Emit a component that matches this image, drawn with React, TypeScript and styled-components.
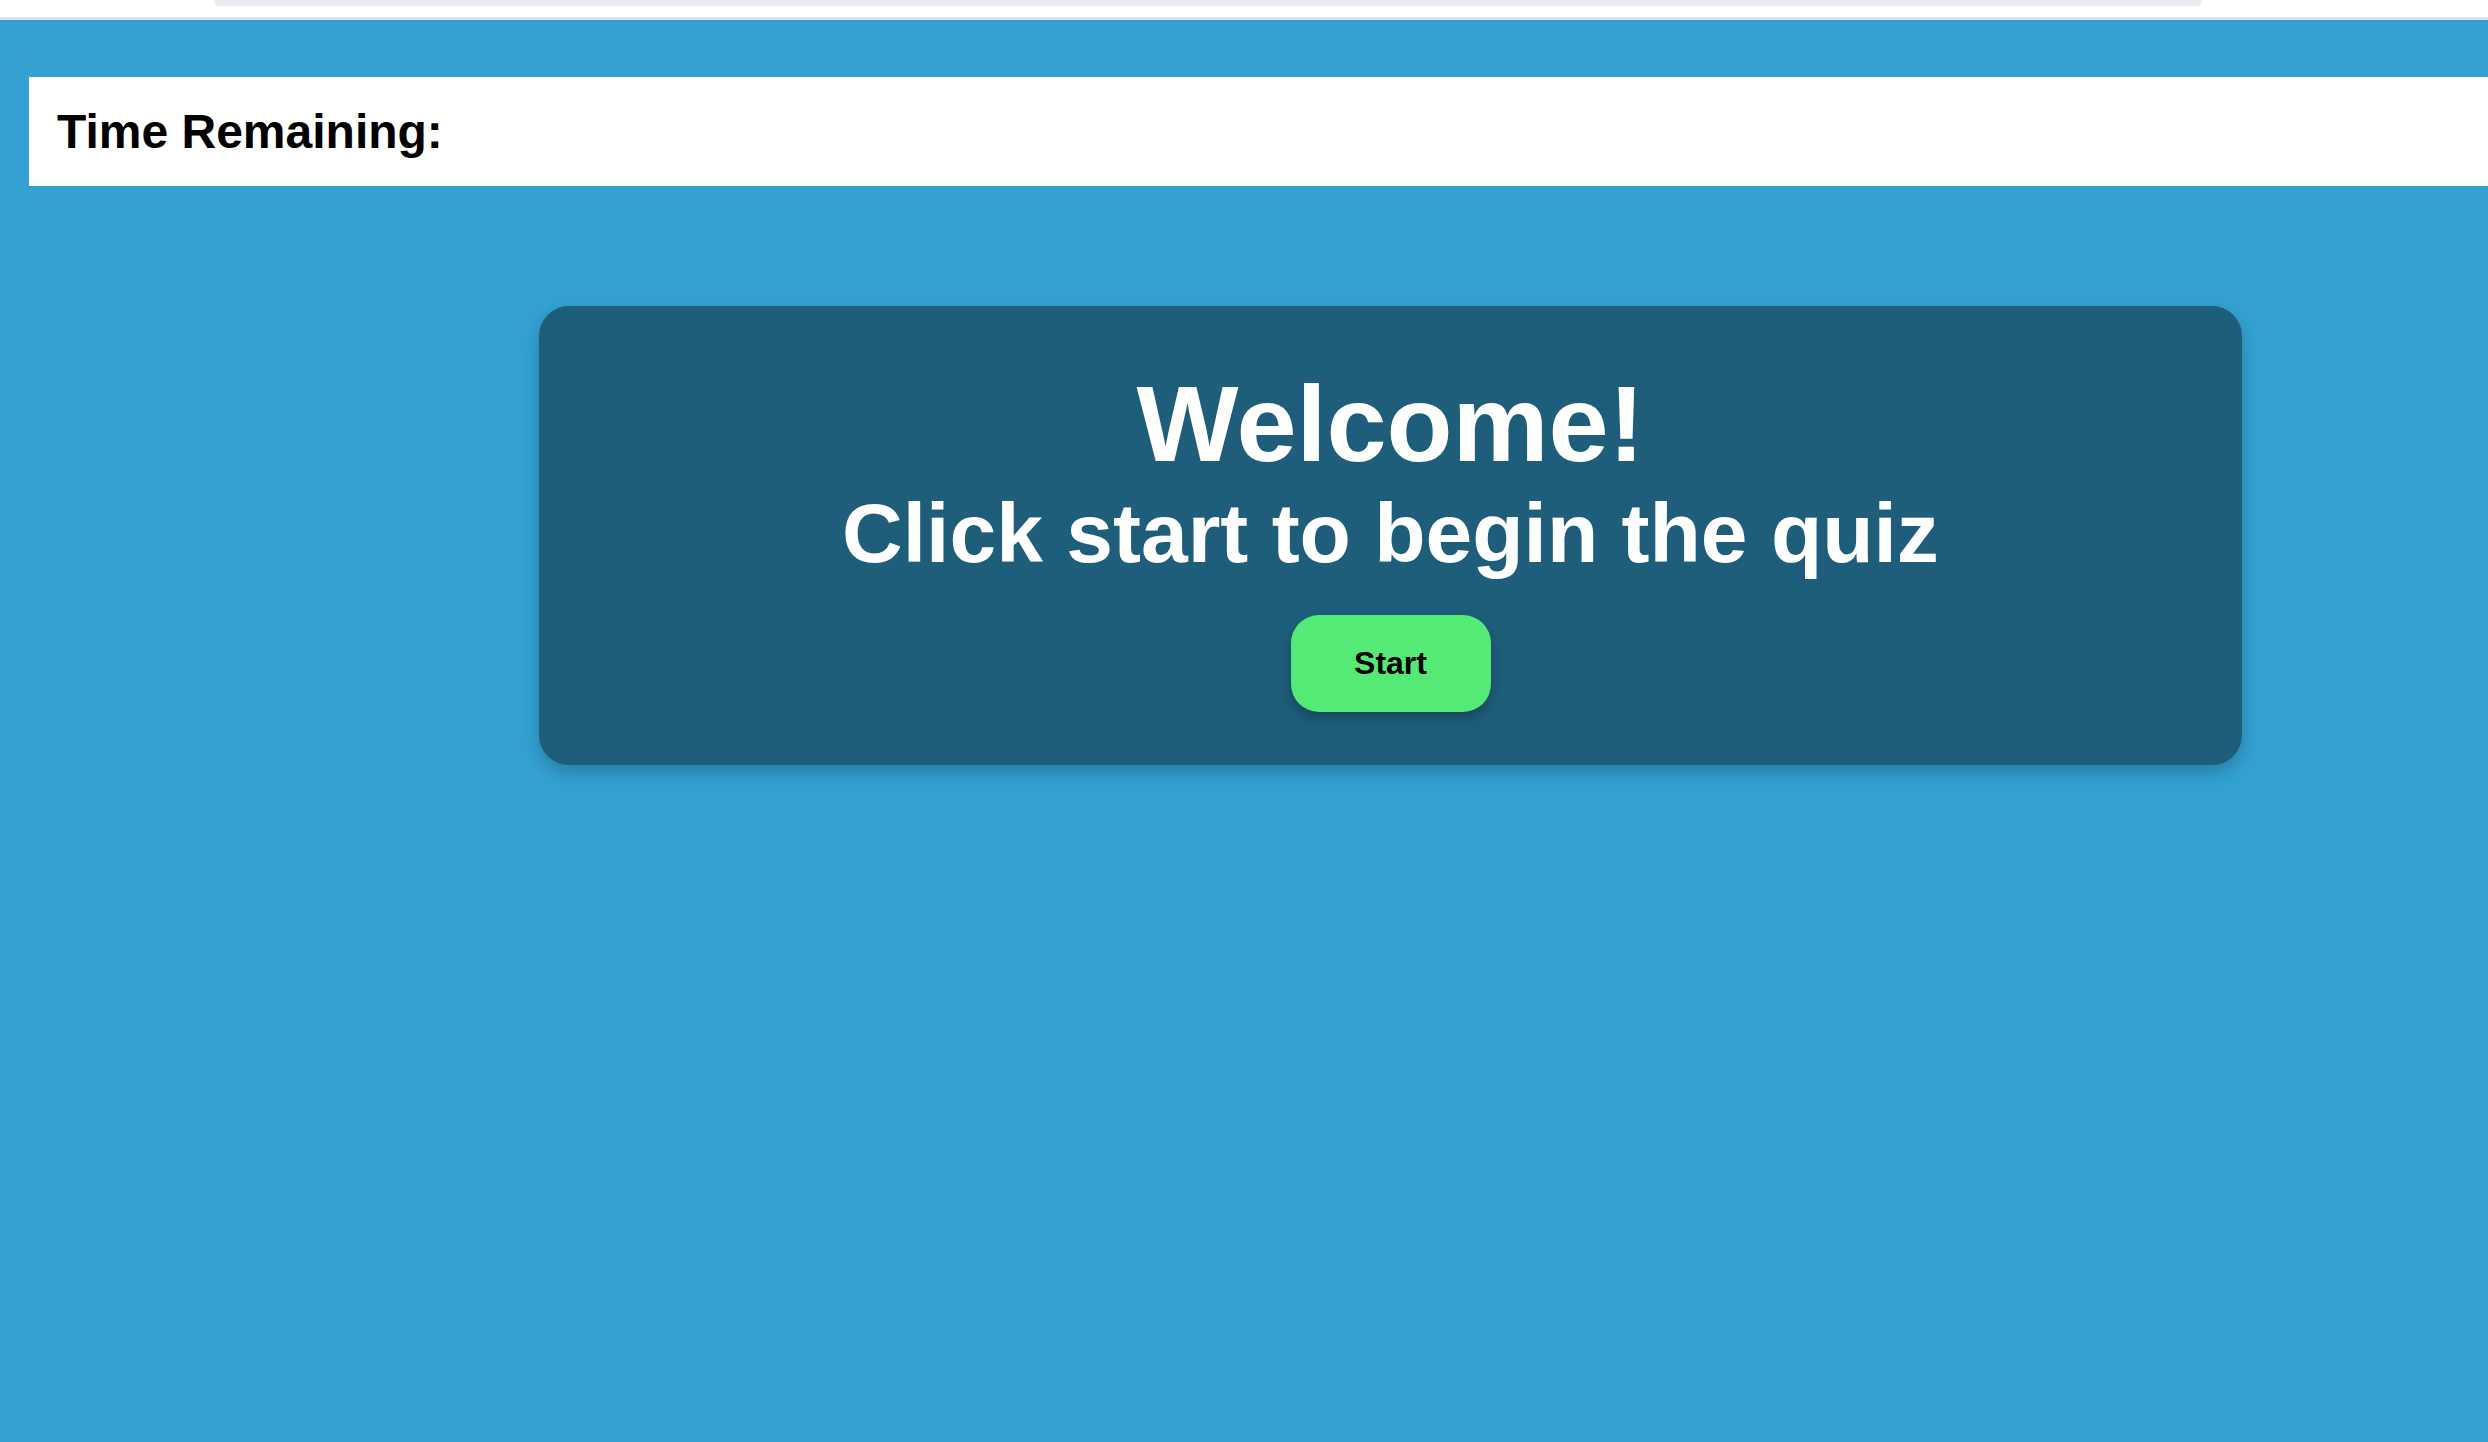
import React from "react";
import styled, { createGlobalStyle } from "styled-components";

const GlobalStyle = createGlobalStyle`
  html, body {
    margin: 0;
    padding: 0;
    background: #33a2d2;
    font-family: "Liberation Sans", Arial, Helvetica, sans-serif;
  }
  * { box-sizing: border-box; }
`;

const Page = styled.div`
  min-height: 1442px;
  background: #33a2d2;
  display: flex;
  flex-direction: column;
`;

const ChromeStrip = styled.div`
  height: 20px;
  background: #ffffff;
  border-bottom: 3px solid #dfe2ea;
  display: flex;
  padding-left: 214px;
`;

const ChromePill = styled.div`
  width: 1988px;
  height: 6px;
  background: #e9ecf4;
  border-radius: 0 0 14px 14px;
`;

const Main = styled.main`
  display: flex;
  flex-direction: column;
  padding: 57px 0 0 29px;
`;

const TimerBar = styled.header`
  background: #ffffff;
  height: 109px;
  padding: 27px 28px;
  display: flex;
  align-items: flex-start;
`;

const TimerLabel = styled.h2`
  margin: 0;
  font-size: 48px;
  line-height: 55px;
  font-weight: 700;
  color: #000000;
`;

const Card = styled.section`
  margin: 120px 0 0 510px;
  width: 1703px;
  height: 459px;
  background: #1e5e7b;
  border-radius: 30px;
  box-shadow: 0 8px 18px rgba(0, 0, 0, 0.22);
  padding-top: 57px;
  display: flex;
  flex-direction: column;
  align-items: center;
  color: #ffffff;
`;

const Title = styled.h1`
  margin: 0;
  font-size: 108px;
  line-height: 122px;
  font-weight: 700;
`;

const Subtitle = styled.h2`
  margin: 0;
  font-size: 84px;
  line-height: 96px;
  font-weight: 700;
`;

const StartButton = styled.button`
  margin-top: 34px;
  width: 200px;
  height: 97px;
  border: none;
  border-radius: 28px;
  background: #55e976;
  color: #000000;
  font-family: "Liberation Sans", Arial, Helvetica, sans-serif;
  font-size: 32px;
  font-weight: 700;
  box-shadow: 0 6px 14px rgba(0, 0, 0, 0.25);
  cursor: pointer;
`;

export default function App() {
  return (
    <>
      <GlobalStyle />
      <Page>
        <ChromeStrip>
          <ChromePill />
        </ChromeStrip>
        <Main>
          <TimerBar>
            <TimerLabel>Time Remaining:</TimerLabel>
          </TimerBar>
          <Card>
            <Title>Welcome!</Title>
            <Subtitle>Click start to begin the quiz</Subtitle>
            <StartButton>Start</StartButton>
          </Card>
        </Main>
      </Page>
    </>
  );
}
